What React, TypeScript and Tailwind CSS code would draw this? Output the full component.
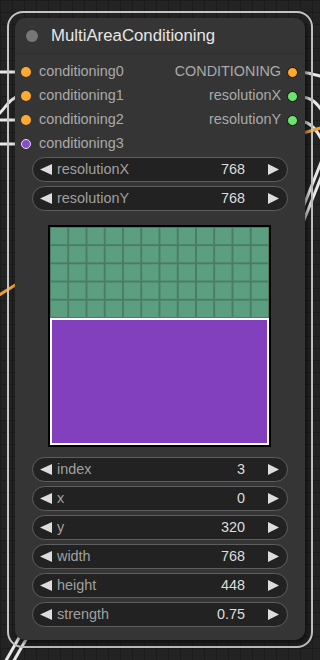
const inputs = [
  { name: 'conditioning0', dot: 'bg-[#ffa931]' },
  { name: 'conditioning1', dot: 'bg-[#ffa931]' },
  { name: 'conditioning2', dot: 'bg-[#ffa931]' },
  { name: 'conditioning3', dot: 'bg-[#8a4bd0] border-[1.5px] border-[#e0e0e0]' },
]

const outputs = [
  { name: 'CONDITIONING', dot: 'bg-[#ffa931]' },
  { name: 'resolutionX', dot: 'bg-[#6fe36f]' },
  { name: 'resolutionY', dot: 'bg-[#6fe36f]' },
]

const areaWidgets = [
  { label: 'index', value: '3' },
  { label: 'x', value: '0' },
  { label: 'y', value: '320' },
  { label: 'width', value: '768' },
  { label: 'height', value: '448' },
  { label: 'strength', value: '0.75' },
]

function Widget({ label, value }: { label: string; value: string }) {
  return (
    <div className="flex h-[25px] items-center rounded-full border border-[#5e5e5e] bg-[#222] pl-[7px] pr-[8px] text-[14.4px]">
      <svg width="12" height="11" viewBox="0 0 12 11" aria-hidden>
        <polygon points="12,0 12,11 0,5.5" fill="#ddd" />
      </svg>
      <span className="ml-[5px] flex-1 text-[#a0a0a0]">{label}</span>
      <span className="text-[#ddd]">{value}</span>
      <svg className="ml-[23px]" width="11" height="11" viewBox="0 0 11 11" aria-hidden>
        <polygon points="0,0 0,11 11,5.5" fill="#ddd" />
      </svg>
    </div>
  )
}

function Wires() {
  return (
    <svg className="absolute inset-0" width="320" height="660" viewBox="0 0 320 660" fill="none" aria-hidden>
      <g stroke="#e8e8e8" strokeWidth="3">
        <path d="M-4 72 L20 72" />
        <path d="M-4 116 C4 112 8 98 20 96" />
        <path d="M-4 120 L20 120" />
        <path d="M-4 144 L20 144" />
        <path d="M300 72 C310 73 316 75 324 77" />
        <path d="M300 97 C312 97 318 104 324 114" />
        <path d="M300 121 C312 122 318 132 324 144" />
        <path d="M300 215 L326 150" />
        <path d="M300 230 L326 165" />
        <path d="M4 664 L20 636" />
        <path d="M12 664 L28 636" />
      </g>
      <g stroke="#f0a030" strokeWidth="3">
        <path d="M-4 297 L20 282" />
        <path d="M300 134 L324 127" />
      </g>
    </svg>
  )
}

export default function App() {
  return (
    <div className="relative h-[660px] w-[320px] overflow-hidden bg-[#232323] bg-[linear-gradient(to_right,#1b1b1b_1px,transparent_1px),linear-gradient(to_bottom,#1b1b1b_1px,transparent_1px)] bg-[size:12px_12px] pl-[7px] pt-[11px] font-['Liberation_Sans',Arial,sans-serif]">
      <Wires />
      <div className="relative w-[306px] rounded-[16px] border-2 border-[#c4c4c4] px-[6px] pb-[6px] pt-[5px]">
        <div className="flex h-[622px] flex-col rounded-[10px] bg-[#353535] shadow-[2px_3px_6px_rgba(0,0,0,0.6)]">
          <div className="flex h-[36px] items-center border-b border-[#2f2f2f] pl-[11px]">
            <span className="h-[12px] w-[12px] rounded-full bg-[#777]" />
            <span className="ml-[13px] text-[16.8px] text-[#e6e6e6]">MultiAreaConditioning</span>
          </div>

          <div className="flex justify-between pt-[6px] text-[14.4px] text-[#aaa]">
            <div className="flex flex-col">
              {inputs.map((s) => (
                <div key={s.name} className="flex h-[24px] items-center pl-[6px]">
                  <span className={`h-[10px] w-[10px] rounded-full ${s.dot}`} />
                  <span className="ml-[8px]">{s.name}</span>
                </div>
              ))}
            </div>
            <div className="flex flex-col items-end">
              {outputs.map((s) => (
                <div key={s.name} className="flex h-[24px] items-center pr-[7px]">
                  <span>{s.name}</span>
                  <span className={`ml-[6px] h-[11px] w-[11px] rounded-full border-[1.5px] border-[#111] ${s.dot}`} />
                </div>
              ))}
            </div>
          </div>

          <div className="mt-[1px] flex flex-col gap-[4px] px-[17px]">
            <Widget label="resolutionX" value="768" />
            <Widget label="resolutionY" value="768" />
          </div>

          <div className="ml-[33px] mt-[14px] mb-[10px] flex h-[222px] w-[223px] flex-col bg-black p-[2px]">
            <div className="h-[91px] bg-[#5c9e80] bg-[linear-gradient(to_right,#4a7d64_1.5px,transparent_1.5px),linear-gradient(to_bottom,#4a7d64_1.5px,transparent_1.5px)] bg-[size:18.25px_18.2px] bg-[position:-1px_-1px]" />
            <div className="flex-1 border-2 border-white bg-[#8240be]" />
          </div>

          <div className="flex flex-col gap-[4px] px-[17px]">
            {areaWidgets.map((w) => (
              <Widget key={w.label} label={w.label} value={w.value} />
            ))}
          </div>
        </div>
      </div>
    </div>
  )
}
